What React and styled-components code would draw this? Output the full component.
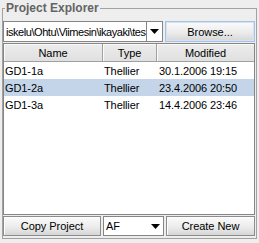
import React from "react";
import styled, { createGlobalStyle } from "styled-components";

const Global = createGlobalStyle`
  html, body { margin: 0; padding: 0; background: #eeeeee; }
  body { font-family: "Liberation Sans", Arial, sans-serif; font-size: 11px; color: #000; }
  * { box-sizing: border-box; }
`;

const Window = styled.div`
  width: 259px;
  height: 243px;
  padding: 0 2px;
  background: #eeeeee;
`;

const Panel = styled.fieldset`
  margin: 0;
  height: 239px;
  border: 1px solid #a2a2a2;
  padding: 5px 1px 2px 0;
  display: flex;
  flex-direction: column;
  gap: 1px;
  min-width: 0;
`;

const Legend = styled.legend`
  font-family: "Liberation Sans", Arial, sans-serif;
  font-weight: bold;
  font-size: 12px;
  color: #646464;
  padding: 0 1px;
  margin-left: 2px;
  line-height: 16px;
`;

const Row = styled.div`
  display: flex;
  align-items: stretch;
  gap: 2px;
  height: ${p => p.$h}px;
  flex: none;
`;

const Combo = styled.div`
  display: flex;
  width: ${p => p.$w}px;
  border: 1px solid #858585;
  background: #fff;
`;

const ComboText = styled.div`
  flex: 1;
  padding-left: 2px;
  display: flex;
  align-items: center;
  white-space: nowrap;
  overflow: hidden;
  font-size: 11px;
  letter-spacing: ${p => p.$tight ? -0.45 : -0.1}px;
`;

const ArrowBtn = styled.div`
  width: 16px;
  display: flex;
  align-items: center;
  justify-content: center;
  background: #fff;
  border-left: ${p => (p.$flat ? "none" : "1px solid #858585")};
`;

const Arrow = () => (
  <svg width="9" height="5" viewBox="0 0 9 5">
    <path d="M0 0H9L4.5 5Z" fill="#000" />
  </svg>
);

const Button = styled.div`
  flex: ${p => (p.$grow ? 1 : "none")};
  width: ${p => (p.$w ? p.$w + "px" : "auto")};
  display: flex;
  align-items: center;
  justify-content: center;
  border: 1px solid ${p => (p.$focus ? "#a8c2e4" : "#8c8c8c")};
  box-shadow: ${p => (p.$focus ? "inset 0 0 0 1px #d4e2f4" : "inset 1px 1px 0 #fdfdfd")};
  background: linear-gradient(#fbfbfb, #ececec 55%, #d6d6d6);
  font-size: 11px;
  letter-spacing: -0.05px;
`;

const Table = styled.div`
  flex: 1;
  border: 1px solid #858585;
  background: #fff;
  display: flex;
  flex-direction: column;
`;

const Grid = styled.div`
  display: grid;
  grid-template-columns: 99px 54px 1fr;
  height: ${p => p.$h}px;
  background: ${p => (p.$sel ? "#c4d5ea" : "transparent")};
`;

const Head = styled.div`
  display: flex;
  align-items: center;
  justify-content: center;
  background: linear-gradient(#ececec, #e0e0e0);
  border-right: 1px solid #a0a0a0;
  border-bottom: 1px solid #a0a0a0;
  box-shadow: inset 1px 1px 0 #fafafa;
  font-size: 11px;
  letter-spacing: -0.05px;
  &:last-child { border-right: none; }
`;

const Cell = styled.div`
  display: flex;
  align-items: center;
  padding-left: ${p => p.$pad || 1}px;
  white-space: nowrap;
  overflow: hidden;
  font-size: 11px;
  letter-spacing: -0.1px;
`;

const rows = [
  ["GD1-1a", "Thellier", "30.1.2006 19:15"],
  ["GD1-2a", "Thellier", "23.4.2006 20:50", true],
  ["GD1-3a", "Thellier", "14.4.2006 23:46"],
];

export default function App() {
  return (
    <>
      <Global />
      <Window>
        <Panel>
          <Legend>Project Explorer</Legend>
          <Row $h={21}>
            <Combo $w={160}>
              <ComboText $tight>iskelu\Ohtu\Viimesin\ikayaki\tes</ComboText>
              <ArrowBtn><Arrow /></ArrowBtn>
            </Combo>
            <Button $grow $focus>Browse...</Button>
          </Row>
          <Table>
            <Grid $h={18}>
              <Head>Name</Head>
              <Head>Type</Head>
              <Head>Modified</Head>
            </Grid>
            {rows.map(r => (
              <Grid key={r[0]} $h={17} $sel={r[3]}>
                <Cell>{r[0]}</Cell>
                <Cell>{r[1]}</Cell>
                <Cell $pad={2}>{r[2]}</Cell>
              </Grid>
            ))}
          </Table>
          <Row $h={20}>
            <Button $w={98}>Copy Project</Button>
            <Combo $w={61}>
              <ComboText>AF</ComboText>
              <ArrowBtn $flat><Arrow /></ArrowBtn>
            </Combo>
            <Button $grow>Create New</Button>
          </Row>
        </Panel>
      </Window>
    </>
  );
}
